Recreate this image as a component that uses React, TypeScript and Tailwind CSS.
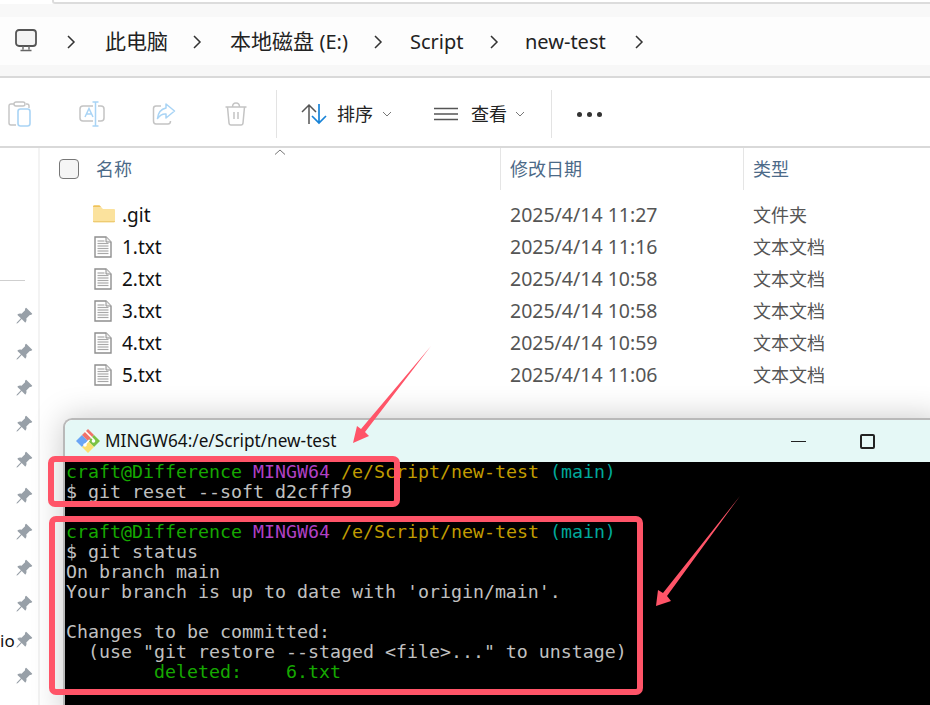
import React from "react";
import { BsPinAngleFill } from "react-icons/bs";

const SANS = "font-['Noto_Sans','Noto_Sans_CJK_SC',sans-serif]";

function Chevron() {
  return (
    <svg width="10" height="16" viewBox="0 0 10 16" className="shrink-0">
      <path d="M2 2 L8 8 L2 14" fill="none" stroke="#333" strokeWidth="1.5" />
    </svg>
  );
}

function SmallChevron() {
  return (
    <svg width="10" height="6" viewBox="0 0 10 6" className="shrink-0">
      <path d="M1 1 L5 5 L9 1" fill="none" stroke="#777" strokeWidth="1" />
    </svg>
  );
}

function FileIcon() {
  return (
    <svg width="18" height="22" viewBox="0 0 18 22">
      <path d="M1 1 H12 L17 6 V21 H1 Z" fill="#fff" stroke="#8f8f8f" strokeWidth="1.4" />
      <path d="M12 1 V6 H17" fill="#eee" stroke="#8f8f8f" strokeWidth="1" />
      {[5, 7.5, 10, 12.5, 15, 17.5].map((y) => (
        <path key={y} d={`M3.5 ${y} H${y < 7 ? 10.5 : 14.5}`} stroke="#a8a8a8" strokeWidth="1.2" />
      ))}
    </svg>
  );
}

function FolderIcon() {
  return (
    <svg width="22" height="18" viewBox="0 0 24 19">
      <path d="M0 1.5 Q0 0 1.5 0 H7 L9.5 2.5 H0 Z" fill="#f0c35a" />
      <path d="M0 2.5 H9 L11 4 H23 Q24 4 24 5 V17.5 Q24 18.5 23 18.5 H1 Q0 18.5 0 17.5 Z" fill="#fbe29d" />
      <path d="M0 17 H24 V17.5 Q24 18.5 23 18.5 H1 Q0 18.5 0 17.5 Z" fill="#eecb72" />
    </svg>
  );
}

function ToolBtn({ children }: { children: React.ReactNode }) {
  return <div className="flex h-full w-[72px] items-center justify-center">{children}</div>;
}

const files = [
  { name: ".git", date: "2025/4/14 11:27", type: "文件夹", folder: true },
  { name: "1.txt", date: "2025/4/14 11:16", type: "文本文档" },
  { name: "2.txt", date: "2025/4/14 10:58", type: "文本文档" },
  { name: "3.txt", date: "2025/4/14 10:58", type: "文本文档" },
  { name: "4.txt", date: "2025/4/14 10:59", type: "文本文档" },
  { name: "5.txt", date: "2025/4/14 11:06", type: "文本文档" },
];

const G = "text-[#16a800]";
const M = "text-[#b040c4]";
const Y = "text-[#c19c00]";
const T = "text-[#00a89a]";

function Prompt() {
  return (
    <div>
      <span className={G}>craft@Difference</span> <span className={M}>MINGW64</span>{" "}
      <span className={Y}>/e/Script/new-test</span> <span className={T}>(main)</span>
    </div>
  );
}

export default function App() {
  return (
    <div className={`relative flex h-[705px] w-[930px] flex-col overflow-hidden bg-white ${SANS}`}>
      {/* top strip */}
      <div className="h-[4px] bg-white">
        <div className="ml-[52px] h-[4px] rounded-bl-[3px] border-b-2 border-l-2 border-[#dcdcdc]" />
      </div>
      <div className="h-[13px] bg-[#f8f8f8]" />

      {/* breadcrumb */}
      <div className="flex h-[48px] items-center bg-[#fdfdfd] pt-[1px] text-[21px] text-[#222]">
        <svg width="24" height="24" viewBox="0 0 24 24" className="-mt-[1px] ml-[14px] shrink-0">
          <rect x="2" y="1" width="20" height="16" rx="3" fill="#f4f4f4" stroke="#555" strokeWidth="1.8" />
          <path d="M9 17 V20.5 M15 17 V20.5 M6.5 21.5 H17.5" stroke="#666" strokeWidth="1.4" fill="none" />
        </svg>
        <div className="ml-[28px]"><Chevron /></div>
        <span className="ml-[29px] w-[87px]">此电脑</span>
        <Chevron />
        <span className="ml-[28px] w-[143px] whitespace-nowrap">本地磁盘 <span className="text-[20px]">(E:)</span></span>
        <Chevron />
        <span className="ml-[27px] w-[79px] text-[20px]">Script</span>
        <Chevron />
        <span className="ml-[26px] w-[109px] text-[20px]">new-test</span>
        <Chevron />
      </div>
      <div className="h-[11px] bg-[#f7f7f7]" />
      <div className="h-[2px] bg-[#d9d9d9]" />

      {/* toolbar */}
      <div className="flex h-[68px] items-center pt-[4px]">
        <div className="-ml-[16px] flex h-full items-center">
          <ToolBtn>
            <svg width="24" height="26" viewBox="0 0 24 26">
              <path d="M6 3 H3 Q1 3 1 5 V22 Q1 24 3 24 H8 M18 3 H19 Q21 3 21 5 V7" fill="none" stroke="#c4c4c4" strokeWidth="1.4" />
              <rect x="6" y="1" width="11" height="4" rx="2" fill="#fff" stroke="#c4c4c4" strokeWidth="1.4" />
              <rect x="10" y="8" width="12" height="17" rx="2.5" fill="#fff" stroke="#a9d4f5" strokeWidth="1.6" />
            </svg>
          </ToolBtn>
          <ToolBtn>
            <svg width="26" height="26" viewBox="0 0 26 26">
              <path d="M14 5 H4 Q1 5 1 8 V17 Q1 20 4 20 H14 M19 5 H22 Q25 5 25 8 V17 Q25 20 22 20 H19" fill="none" stroke="#c4c4c4" strokeWidth="1.5" />
              <path d="M6 16 L10 7.5 L14 16 M7.5 13 H12.5" fill="none" stroke="#a9d4f5" strokeWidth="1.5" />
              <path d="M16.5 1 V25 M13.5 1 H19.5 M13.5 25 H19.5" fill="none" stroke="#a9d4f5" strokeWidth="1.5" />
            </svg>
          </ToolBtn>
          <ToolBtn>
            <svg width="24" height="24" viewBox="0 0 24 24">
              <path d="M9 4 H4 Q1.5 4 1.5 6.5 V19 Q1.5 22 4 22 H16 Q18.5 22 18.5 19" fill="none" stroke="#c4c4c4" strokeWidth="1.5" />
              <path d="M14 2 L22.5 9 L14 16 V12 Q9 11.5 5.5 16.5 Q6.5 7.5 14 6 Z" fill="#fff" stroke="#a9d4f5" strokeWidth="1.5" strokeLinejoin="round" />
            </svg>
          </ToolBtn>
          <ToolBtn>
            <svg width="22" height="24" viewBox="0 0 22 24">
              <path d="M0.5 5 H21.5 M7.5 5 Q7.5 1 11 1 Q14.5 1 14.5 5" fill="none" stroke="#c4c4c4" strokeWidth="1.5" />
              <path d="M2.5 5 L4 21 Q4.2 23 6 23 H16 Q17.8 23 18 21 L19.5 5" fill="none" stroke="#c4c4c4" strokeWidth="1.5" />
              <path d="M9 10 V17 M13 10 V17" stroke="#c4c4c4" strokeWidth="1.5" />
            </svg>
          </ToolBtn>
        </div>
        <div className="ml-[4px] h-[48px] w-[1px] bg-[#e3e3e3]" />
        <svg width="26" height="24" viewBox="0 0 26 24" className="ml-[24px] shrink-0">
          <path d="M8 22 V3 M1 10 L8 3 L15 10" fill="none" stroke="#555" strokeWidth="1.5" />
          <path d="M18 2 V21 M11 14 L18 21 L25 14" fill="none" stroke="#1883d7" strokeWidth="1.7" />
        </svg>
        <span className="ml-[10px] text-[18px] text-[#222]">排序</span>
        <div className="ml-[9px]"><SmallChevron /></div>
        <svg width="24" height="14" viewBox="0 0 24 14" className="ml-[42px] shrink-0">
          <path d="M0 1.5 H24 M0 7 H24 M0 12.5 H24" stroke="#555" strokeWidth="1.6" />
        </svg>
        <span className="ml-[13px] text-[18px] text-[#222]">查看</span>
        <div className="ml-[8px]"><SmallChevron /></div>
        <div className="ml-[26px] h-[48px] w-[1px] bg-[#e3e3e3]" />
        <div className="ml-[25px] flex gap-[5px]">
          <div className="h-[5px] w-[5px] rounded-full bg-[#333]" />
          <div className="h-[5px] w-[5px] rounded-full bg-[#333]" />
          <div className="h-[5px] w-[5px] rounded-full bg-[#333]" />
        </div>
      </div>
      <div className="h-[2px] bg-[#d9d9d9]" />

      {/* body */}
      <div className="flex min-h-0 flex-1">
        {/* nav sidebar */}
        <div className="relative flex w-[40px] shrink-0 flex-col border-r-2 border-[#f3f3f3]">
          <div className="mt-[132px] h-[1px] w-[25px] bg-[#cfcfcf]" />
          <div className="mt-[26px] flex flex-col gap-[18px] pl-[15px]">
            {Array.from({ length: 11 }).map((_, i) => (
              <BsPinAngleFill key={i} size={18} color="#98a0a8" />
            ))}
          </div>
          <span className="absolute left-0 top-[483px] text-[17px] leading-[20px] text-[#111]">io</span>
        </div>

        {/* file list */}
        <div className="min-w-0 flex-1">
          <div className="relative flex h-[42px] items-start text-[18px] text-[#4c6a88]">
            <svg width="12" height="6" viewBox="0 0 12 6" className="absolute left-[234px] top-[1px]">
              <path d="M1 5.5 L6 1 L11 5.5" fill="none" stroke="#777" strokeWidth="1" />
            </svg>
            <div className="ml-[19px] mt-[11px] h-[20px] w-[20px] rounded-[4px] border border-[#777] bg-[#f5f5f5]" />
            <span className="ml-[17px] mt-[8px] w-[404px]">名称</span>
            <div className="flex h-[42px] w-[243px] items-start border-l border-[#e5e5e5] pl-[9px] pt-[8px]">修改日期</div>
            <div className="flex h-[42px] items-start border-l border-[#e5e5e5] pl-[9px] pt-[8px]">类型</div>
          </div>
          <div className="mt-[9px] flex flex-col">
            {files.map((f) => (
              <div key={f.name} className="flex h-[32px] items-center text-[19px] text-[#111]">
                <div className="flex w-[82px] shrink-0 justify-end pr-[10px]">
                  {f.folder ? <div className="mr-[-3px] -mt-[3px]"><FolderIcon /></div> : <FileIcon />}
                </div>
                <span className="w-[388px]">{f.name}</span>
                <span className="w-[243px] text-[19.5px] text-[#555]">{f.date}</span>
                <span className="text-[18px] text-[#555]">{f.type}</span>
              </div>
            ))}
          </div>
        </div>
      </div>

      {/* terminal window, floating over the explorer */}
      <div className="absolute left-[63px] top-[418px] flex h-[300px] w-[880px] flex-col rounded-tl-[9px] border-l-2 border-t-2 border-[#b9b9b9] shadow-[0_0_32px_rgba(0,0,0,0.22)]">
        <div className="flex h-[42px] shrink-0 items-center rounded-tl-[8px] bg-[#e5f8f6]">
          <svg width="26" height="26" viewBox="0 0 26 26" className="ml-[10px] shrink-0">
            <path d="M1 13 L7 7 L13 13 L7 19 Z" fill="#6aa5f5" />
            <path d="M7 7 L13 1 L19 7 L13 13 Z" fill="#f0736a" />
            <path d="M13 13 L19 7 L25 13 L19 19 Z" fill="#7cc243" />
            <path d="M7 19 L13 13 L19 19 L13 25 Z" fill="#fbdf70" />
            <path d="M10 3 L19 12 M14.5 12 L10.5 16" stroke="#fff" strokeWidth="1.6" />
            <circle cx="18.5" cy="13" r="1.8" fill="#fff" />
            <circle cx="10" cy="17" r="1.8" fill="#fff" />
          </svg>
          <span className="ml-[4px] w-[232px] whitespace-nowrap text-[17.2px] text-[#111]">MINGW64:/e/Script/new-test</span>
          <div className="ml-[454px] h-[1px] w-[15px] bg-[#222]" />
          <div className="ml-[54px] h-[15px] w-[15px] rounded-[2px] border-2 border-[#222]" />
        </div>
        <div className="flex-1 whitespace-pre bg-black pl-[1px] font-['DejaVu_Sans_Mono',monospace] text-[18.27px] leading-[20px] text-[#c0c0c0]">
          <Prompt />
          <div>$ git reset --soft d2cfff9</div>
          <div>&nbsp;</div>
          <Prompt />
          <div>$ git status</div>
          <div>On branch main</div>
          <div>Your branch is up to date with 'origin/main'.</div>
          <div>&nbsp;</div>
          <div>Changes to be committed:</div>
          <div>  (use "git restore --staged &lt;file&gt;..." to unstage)</div>
          <div className={G}>        deleted:    6.txt</div>
        </div>
      </div>

      {/* annotations */}
      <div className="absolute left-[48px] top-[456px] h-[51px] w-[352px] rounded-[7px] border-[6px] border-[#ff5468]" />
      <div className="absolute left-[49px] top-[516px] h-[179px] w-[594px] rounded-[7px] border-[6px] border-[#ff5468]" />
      <svg width="930" height="705" viewBox="0 0 930 705" className="pointer-events-none absolute left-0 top-0">
        <polygon points="431,346 365,432 369,436 353,443 357,426 361,429" fill="#ff5468" />
        <polygon points="740,496 667,596 671,601 656,606 658,590 663,593" fill="#ff5468" />
      </svg>
    </div>
  );
}
